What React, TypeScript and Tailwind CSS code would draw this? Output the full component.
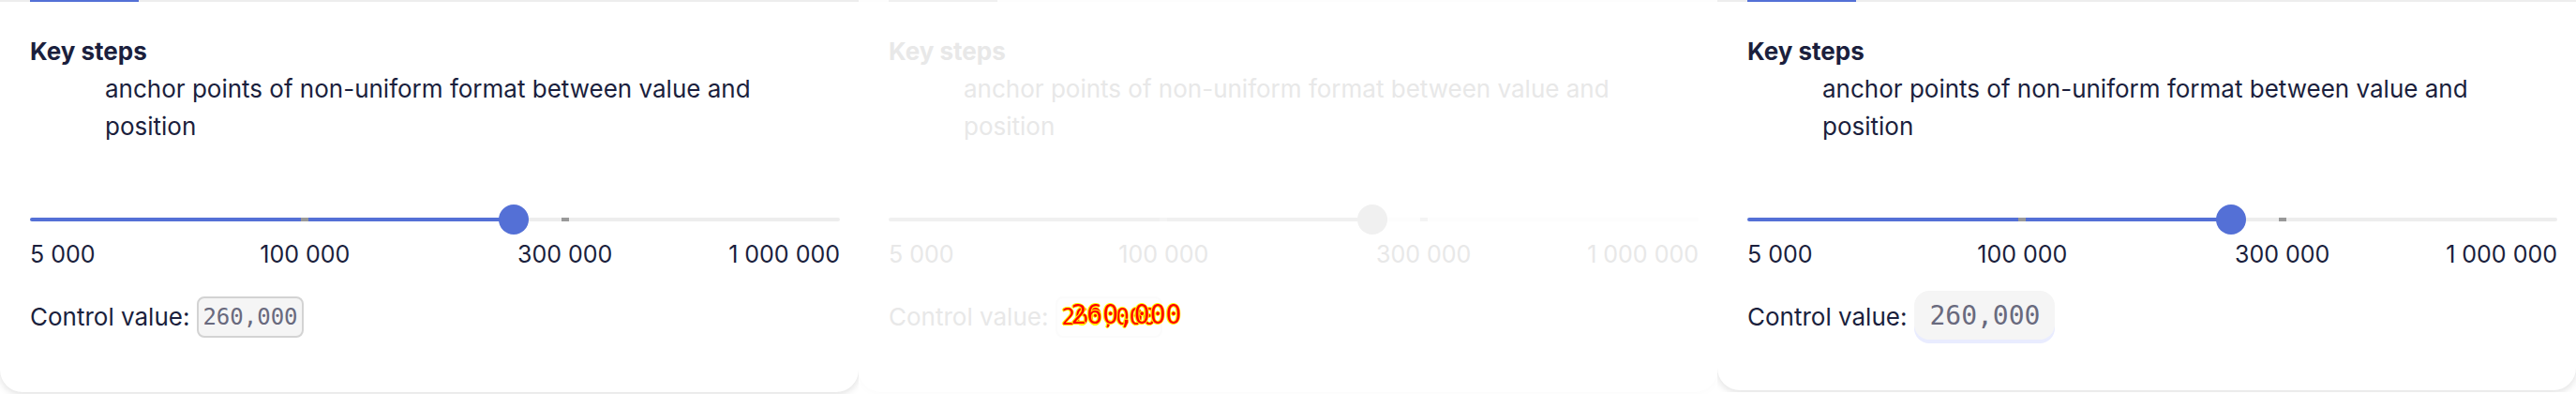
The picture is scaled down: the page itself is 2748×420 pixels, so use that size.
import React, { useState } from "react";

type Variant = "outlined" | "diff" | "raised";

const labels = ["5 000", "100 000", "300 000", "1 000 000"];

const solid = {
  card: "border-[#ededed] shadow-[0_2px_8px_#dedede]",
  tab: "bg-[#5470d6]",
  text: "text-[#1b1f3d]",
  fill: "#5470d6",
  rail: "#ededed",
  tick: "bg-[#999999]",
  thumb: "[&::-webkit-slider-thumb]:bg-[#5470d6]",
};

const palettes: Record<Variant, typeof solid> = {
  outlined: solid,
  raised: solid,
  diff: {
    card: "border-[#fdfdfd] shadow-[0_2px_8px_#fbfbfb]",
    tab: "bg-[#f0f0f0]",
    text: "text-[#e8e8e8]",
    fill: "#f0f0f0",
    rail: "#fdfdfd",
    tick: "bg-[#f4f4f4]",
    thumb: "[&::-webkit-slider-thumb]:bg-[#f0f0f0]",
  },
};

function ControlValue({ variant }: { variant: Variant }) {
  if (variant === "outlined") {
    return (
      <code className="rounded-lg border-2 border-[#d3d3d3] bg-[#f5f5f5] px-1 py-1 font-['DejaVu_Sans_Mono',monospace] text-[24px] leading-8 text-[#696a7e]">
        260,000
      </code>
    );
  }
  if (variant === "raised") {
    return (
      <code className="mb-1 rounded-2xl bg-[#f5f5f5] px-4 pt-[9px] pb-[7px] font-['DejaVu_Sans_Mono',monospace] text-[28px] leading-9 text-[#696a7e] shadow-[0_4px_0_#e9ecff]">
        260,000
      </code>
    );
  }
  return (
    <code className="relative rounded-lg border-2 border-[#fbfbfb] bg-[#fefefe] px-1 py-1 font-['DejaVu_Sans_Mono',monospace] text-[24px] leading-8 text-[#ff0000] [text-shadow:1px_0_#ff0,-1px_0_#ff0,0_1px_#ff0,0_-1px_#ff0]">
      <span>260,000</span>
      <span className="absolute top-0 left-3.5 text-[28px] leading-9">260,000</span>
    </code>
  );
}

function KeySteps({ variant }: { variant: Variant }) {
  const [position, setPosition] = useState(601);
  const c = palettes[variant];
  const id = `steps-${variant}`;
  const stop = `calc(16px + (100% - 32px) * ${position / 1000})`;
  return (
    <section className="min-w-0 flex-1 overflow-hidden bg-white">
      <div className={`mb-0.5 rounded-b-[24px] border-t-2 bg-white px-8 pr-5 ${c.card} ${c.text} ${variant === "raised" ? "pb-12" : "pb-[50px]"}`}>
        <div className={`-mt-0.5 h-0.5 w-[116px] ${c.tab}`} />
        <dl className="pt-[33px] text-[26px] leading-10">
          <dt className="font-bold">Key steps</dt>
          <dd className="ml-20">anchor points of non-uniform format between value and position</dd>
        </dl>
        <div className="relative mt-[63px] flex">
          <input
            id={id}
            type="range"
            min={0}
            max={1000}
            value={position}
            aria-label="Key steps"
            onChange={(e) => setPosition(Number(e.target.value))}
            className={`h-8 w-full appearance-none bg-transparent [&::-webkit-slider-runnable-track]:h-1 [&::-webkit-slider-runnable-track]:rounded-sm [&::-webkit-slider-runnable-track]:bg-[image:var(--rail)] [&::-webkit-slider-thumb]:-mt-3.5 [&::-webkit-slider-thumb]:size-8 [&::-webkit-slider-thumb]:appearance-none [&::-webkit-slider-thumb]:rounded-full ${c.thumb}`}
            style={{ "--rail": `linear-gradient(to right, ${c.fill} ${stop}, ${c.rail} ${stop})` } as React.CSSProperties}
          />
          <div className="pointer-events-none absolute inset-0 grid grid-cols-3 items-center px-4">
            <span className={`h-1 w-2 translate-x-1 justify-self-end ${c.tick}`} />
            <span className={`h-1 w-2 translate-x-1 justify-self-end ${c.tick}`} />
          </div>
        </div>
        <div className="grid grid-cols-[1fr_2fr_2fr_1fr] px-4 pt-px text-[25px] leading-10 whitespace-nowrap">
          {labels.map((label, i) => (
            <span key={label} className={i === 0 ? "-ml-4" : i === 3 ? "-mr-4 justify-self-end" : "text-center"}>
              {label}
            </span>
          ))}
        </div>
        <div className="mt-[17px] flex h-[60px] items-center gap-2 text-[26px] leading-10">
          <label htmlFor={id}>Control value:</label>
          <ControlValue variant={variant} />
        </div>
      </div>
    </section>
  );
}

export default function App() {
  return (
    <main className="flex items-start bg-white font-['Inter',sans-serif]">
      <KeySteps variant="outlined" />
      <KeySteps variant="diff" />
      <KeySteps variant="raised" />
    </main>
  );
}
